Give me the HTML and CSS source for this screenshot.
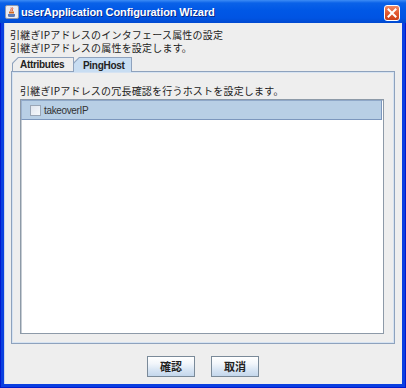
FILE: index.html
```html
<!DOCTYPE html>
<html lang="ja">
<head>
<meta charset="utf-8">
<title>userApplication Configuration Wizard</title>
<link rel="stylesheet" href="styles.css">
</head>
<body>
<div class="window">
  <div class="titlebar">
    <span class="app-icon">
      <svg width="14" height="14" viewBox="0 0 14 14">
        <rect x="0.5" y="0.5" width="13" height="13" rx="1.5" fill="#e9ecf2" stroke="#8b97ad"/>
        <path d="M3 9 h7 v1.5 a1.5 1.5 0 0 1 -1.5 1.5 h-4 a1.5 1.5 0 0 1 -1.5 -1.5z" fill="#5a7bb8"/>
        <path d="M4 8.5 h5 v-2 h-5z" fill="#d2691e"/>
        <path d="M6 6 c-1 -1.5 1 -2 0 -3.5 M7.5 6 c-1 -1.5 1 -2 0 -3.5" stroke="#e0502a" stroke-width="1" fill="none"/>
      </svg>
    </span>
    <span class="title">userApplication Configuration Wizard</span>
    <span class="close">
      <svg width="16" height="16" viewBox="0 0 16 16">
        <path d="M4.5 4.5 L11.5 11.5 M11.5 4.5 L4.5 11.5" stroke="#fff" stroke-width="2" stroke-linecap="square"/>
      </svg>
    </span>
  </div>
  <div class="client">
    <div class="intro">
      <div class="line">引継ぎIPアドレスのインタフェース属性の設定</div>
      <div class="line">引継ぎIPアドレスの属性を設定します。</div>
    </div>
    <div class="tabs">
      <div class="tab"><div class="tab-inner">Attributes</div></div>
      <div class="tab selected"><div class="tab-inner">PingHost</div></div>
    </div>
    <div class="panel">
      <div class="panel-label">引継ぎIPアドレスの冗長確認を行うホストを設定します。</div>
      <div class="list">
        <div class="row selected"><span class="check"></span><span class="row-text">takeoverIP</span></div>
      </div>
    </div>
    <div class="buttons">
      <button class="btn">確認</button>
      <button class="btn">取消</button>
    </div>
  </div>
</div>
</body>
</html>
```

FILE: styles.css
```css
html, body {
  margin: 0;
  padding: 0;
  background: #ffffff;
}

.window {
  width: 406px;
  height: 388px;
  box-sizing: border-box;
  display: flex;
  flex-direction: column;
  background: #0a3fe0;
  box-shadow: inset 1px 0 0 #0019cf, inset -1px 0 0 #0019cf, inset 0 -1px 0 #0019cf;
}

.titlebar {
  height: 23px;
  flex: none;
  display: flex;
  align-items: center;
  background: linear-gradient(to bottom, #3d8cf5 0px, #0a62e8 3px, #0058e6 10px, #0054e3 18px, #0049d0 23px);
  padding: 0 6px 0 5px;
  box-sizing: border-box;
}

.app-icon {
  width: 14px;
  height: 14px;
  display: flex;
  margin-right: 2px;
  margin-top: 1px;
}

.title {
  flex: 1;
  font-family: "Liberation Sans", Arial, sans-serif;
  font-weight: bold;
  font-size: 11px;
  letter-spacing: -0.1px;
  color: #ffffff;
  text-shadow: 1px 1px 0 #0a2a8a;
  white-space: nowrap;
}

.close {
  width: 16px;
  height: 16px;
  box-sizing: border-box;
  border: 1px solid #ffffff;
  border-radius: 3px;
  background: linear-gradient(to bottom, #f08a64 0%, #e2582f 50%, #cc3f18 100%);
  display: flex;
  position: relative;
  top: 1px;
}

.close svg {
  margin: -1px;
}

.client {
  flex: 1;
  margin: 0 4px 4px 4px;
  background: #eeeeee;
  display: flex;
  flex-direction: column;
  box-shadow: inset 1px 0 0 #c9d5ea;
}

.intro {
  padding: 5px 0 0 6px;
  font-family: "Noto Sans CJK JP", sans-serif;
  font-size: 10px;
  letter-spacing: 0.2px;
  line-height: 13px;
  color: #222222;
}

.line {
  height: 13px;
  white-space: nowrap;
}

.tabs {
  margin: 3px 0 0 8px;
  height: 14px;
  display: flex;
  align-items: flex-end;
}

.tab {
  height: 14px;
  background: #8ea2bd;
  padding: 1px 1px 0 1px;
  box-sizing: border-box;
  clip-path: polygon(6px 0, 100% 0, 100% 100%, 0 100%, 0 6px);
}

.tab + .tab {
  margin-left: -1px;
}

.tab-inner {
  height: 100%;
  background: #eeeeee;
  clip-path: polygon(5.5px 0, 100% 0, 100% 100%, 0 100%, 0 5.5px);
  font-family: "Liberation Sans", Arial, sans-serif;
  font-weight: bold;
  font-size: 10px;
  letter-spacing: -0.3px;
  color: #222222;
  display: flex;
  align-items: center;
  padding: 0 8px 0 7px;
  line-height: 13px;
}

.tab:first-child {
  width: 62px;
}

.tab.selected {
  width: 59px;
  height: 15px;
  margin-bottom: -1px;
  position: relative;
  z-index: 1;
}

.tab.selected .tab-inner {
  background: #c8ddf2;
  padding-left: 9px;
  padding-bottom: 1px;
}

.panel {
  margin: 0 7px;
  height: 273px;
  box-sizing: border-box;
  border: 1px solid #8ea2bd;
  box-shadow: inset 0 0 0 1px #d6e3f2;
  display: flex;
  flex-direction: column;
  padding: 12px 10px 9px 8px;
}

.panel-label {
  height: 13px;
  line-height: 13px;
  font-family: "Noto Sans CJK JP", sans-serif;
  font-size: 10px;
  letter-spacing: 0.2px;
  color: #222222;
  white-space: nowrap;
  margin-bottom: 2px;
}

.list {
  flex: 1;
  background: #ffffff;
  border: 1px solid #8d9aa8;
  box-shadow: inset 1px 1px 0 #c6ccd3;
  display: flex;
  flex-direction: column;
}

.row {
  height: 20px;
  box-sizing: border-box;
  display: flex;
  align-items: center;
  padding-left: 8px;
}

.row.selected {
  background: #b8cfe5;
  border: 1px solid #7c97bd;
  border-top-color: #8fa8c8;
  border-left-color: #9bb2cf;
  margin-right: 1px;
}

.check {
  width: 11px;
  height: 11px;
  box-sizing: border-box;
  border: 1px solid #9aa6b6;
  background: linear-gradient(135deg, #dfe5ee 0%, #f7f9fc 100%);
  margin-right: 3px;
}

.row-text {
  font-family: "Liberation Sans", Arial, sans-serif;
  font-size: 10px;
  letter-spacing: -0.35px;
  color: #333333;
}

.buttons {
  margin-top: 12px;
  display: flex;
  justify-content: center;
  gap: 16px;
}

.btn {
  width: 48px;
  height: 21px;
  margin: 0;
  padding: 0;
  border: 1px solid #7a8a99;
  background: linear-gradient(to bottom, #ffffff 0%, #f2f6fb 35%, #d6e4f3 70%, #c4d7ec 100%);
  font-family: "Noto Sans CJK JP", sans-serif;
  font-weight: bold;
  font-size: 11px;
  color: #222222;
  line-height: 19px;
}
```
